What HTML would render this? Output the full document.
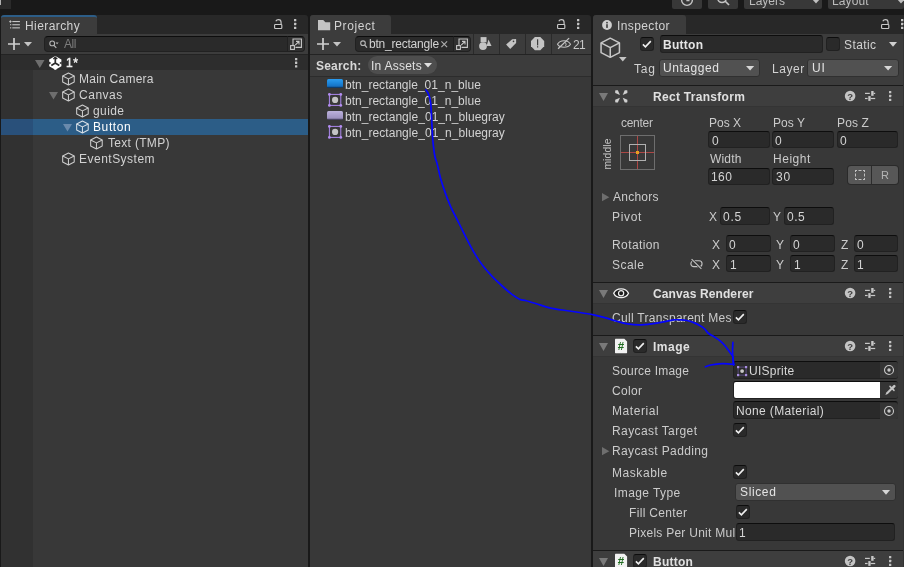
<!DOCTYPE html><html><head><meta charset="utf-8"><title>Unity</title><style>
*{box-sizing:border-box;margin:0;padding:0}
html,body{width:904px;height:567px;overflow:hidden;background:#191919}
body{position:relative;font-family:"Liberation Sans",sans-serif;font-size:12px;color:#c8c8c8;line-height:16px}
.a{position:absolute}
.t{position:absolute;white-space:nowrap;height:16px;line-height:16px;will-change:transform}
.b{font-weight:bold}
.f{position:absolute;background:#2a2a2a;border:1px solid #212121;border-top-color:#0d0d0d;border-radius:3px}
.dd{position:absolute;background:#515151;border:1px solid #303030;border-radius:3px}
.cb{position:absolute;width:14px;height:14px;background:#2a2a2a;border:1px solid #212121;border-top-color:#0d0d0d;border-radius:3px}
.hdr{position:absolute;left:593px;width:311px;background:#3e3e3e;border-top:1px solid #1a1a1a}
svg{position:absolute;overflow:visible}
</style></head><body>
<div class="a" style="left:0px;top:0px;width:11px;height:9px;background:#2a2a2a;"></div>
<div class="a" style="left:0px;top:0px;width:1px;height:5px;background:#b0b0b0;"></div>
<div class="a" style="left:672px;top:0px;width:30px;height:9px;background:#383838;border-radius:0 0 2px 2px"></div>
<div class="a" style="left:708px;top:0px;width:30px;height:9px;background:#383838;border-radius:0 0 2px 2px"></div>
<div class="a" style="left:744px;top:0px;width:78px;height:9px;background:#383838;border-radius:0 0 2px 2px"></div>
<div class="a" style="left:828px;top:0px;width:76px;height:9px;background:#383838;border-radius:0 0 2px 2px"></div>
<div class="t" style="left:748.97px;top:-7.00px;color:#bdbdbd;letter-spacing:-0.020px;">Layers</div>
<div class="t" style="left:831.97px;top:-7.00px;color:#bdbdbd;letter-spacing:0.109px;">Layout</div>
<svg style="left:812px;top:-1px" width="8" height="4.5"><path d="M0 0H8L4.0 4.5Z" fill="#c0c0c0"/></svg>
<svg style="left:896.5px;top:-1px" width="8" height="4.5"><path d="M0 0H8L4.0 4.5Z" fill="#c0c0c0"/></svg>
<svg style="left:680.2px;top:-7px" width="14" height="14"><circle cx="7" cy="7" r="5.4" fill="none" stroke="#c4c4c4" stroke-width="1.4"/><path d="M7 4V7.500H9.500" fill="none" stroke="#c4c4c4" stroke-width="1.3"/></svg>
<svg style="left:715.5px;top:-8px" width="14" height="14"><circle cx="6" cy="6" r="4.4" fill="none" stroke="#c4c4c4" stroke-width="1.500"/><path d="M9 9L13 13" stroke="#c4c4c4" stroke-width="1.7"/></svg>
<div class="a" style="left:1px;top:15px;width:307px;height:19px;background:#282828;border-radius:3px 3px 0 0"></div>
<div class="a" style="left:1px;top:15px;width:96px;height:19px;background:#3c3c3c;border-radius:3px 3px 0 0;border-top:2px solid #2c5d87"></div>
<div class="a" style="left:1px;top:34px;width:307px;height:20px;background:#3c3c3c;"></div>
<div class="a" style="left:1px;top:54px;width:307px;height:513px;background:#383838;"></div>
<div class="a" style="left:1px;top:54px;width:307px;height:1px;background:#232323;"></div>
<div class="a" style="left:1px;top:55px;width:307px;height:15px;background:#2d2d2d;"></div>
<div class="a" style="left:1px;top:70px;width:32px;height:497px;background:#313131;"></div>
<svg style="left:9px;top:20px" width="11" height="9"><g fill="#c4c4c4"><rect x="3.300" y="1" width="7.600" height="1.100"/><rect x="3.300" y="4.200" width="7.600" height="1.100"/><rect x="3.300" y="7.300" width="7.600" height="1.100"/><rect x="0.300" y="1" width="2.200" height="1.100"/><rect x="0.850" y="0.400" width="1.100" height="2.300"/><rect x="1" y="4.200" width="1.300" height="1.100"/><rect x="1" y="7.300" width="1.300" height="1.100"/></g></svg>
<div class="t" style="left:24.77px;top:18.00px;color:#d2d2d2;letter-spacing:0.420px;">Hierarchy</div>
<svg style="left:273.9px;top:18.9px" width="8.4" height="10.1"><g fill="none" stroke="#c8c8c8" stroke-width="1.150"><rect x="0.600" y="5.500" width="7.200" height="4" rx="0.700" fill="#1c1c1c"/><path d="M7.100 5.400V3.400C7.100 1.500 5.800 0.600 4.500 0.600C3.300 0.600 2.300 1.200 1.800 2.300"/></g></svg>
<svg style="left:294.2px;top:19.1px" width="3" height="12"><g fill="#c4c4c4"><rect x="0" y="0" width="2.300" height="2.300" rx=".3"/><rect x="0" y="3.85" width="2.300" height="2.300" rx=".3"/><rect x="0" y="7.7" width="2.300" height="2.300" rx=".3"/></g></svg>
<svg style="left:8px;top:38px" width="12" height="12"><path d="M6 0V12M0 6H12" stroke="#d0d0d0" stroke-width="1.7" fill="none"/></svg>
<svg style="left:24px;top:42px" width="8" height="4.5"><path d="M0 0H8L4.0 4.5Z" fill="#c4c4c4"/></svg>
<div class="f" style="left:44px;top:36px;width:244px;height:16px;border-radius:4px 0 0 4px;border-right:none"></div>
<div class="a" style="left:287px;top:36px;width:18px;height:16px;background:#303030;border:1px solid #212121;border-top-color:#0d0d0d;border-radius:0 4px 4px 0"></div>
<svg style="left:49px;top:40px" width="10" height="9"><circle cx="3.2" cy="3.400" r="2.400" fill="none" stroke="#b4b4b4" stroke-width="1.1"/><path d="M5 5.3L7.3 7.800" stroke="#b4b4b4" stroke-width="1.2"/><path d="M6.600 2.600H9.600L8.100 4.200Z" fill="#b4b4b4"/></svg>
<div class="t" style="left:63.73px;top:36.00px;color:#7c7c7c;letter-spacing:-0.405px;">All</div>
<svg style="left:290px;top:37.6px" width="12" height="12"><g fill="none" stroke="#c8c8c8" stroke-width="1.1"><path d="M3 8V1H11.400V9.400H5.500"/><rect x="0.6" y="7.600" width="3.8" height="3.8"/><path d="M5.200 7.200L9 3.400M6 3.400H9V6.400"/></g></svg>
<svg style="left:35px;top:60px" width="9.5" height="8"><path d="M0 0H9.5L4.75 8Z" fill="#6e6e6e"/></svg>
<svg style="left:48.6px;top:56px" width="12.6" height="13.8"><g><path d="M6.300 0L12.400 3.450V10.350L6.300 13.800L0.200 10.350V3.450Z" fill="#ffffff"/><path d="M6.300 0.800V7M6.300 7L2.300 9.400M6.300 7L10.300 9.400" stroke="#2a2a2a" stroke-width="1.700" fill="none"/><path d="M4.300 2.900L6.300 1.400L8.300 2.900" stroke="#2a2a2a" stroke-width="1.300" fill="none"/><path d="M0 5.600L2.300 6.900L0 8.400ZM12.600 5.600L10.300 6.900L12.600 8.400Z" fill="#2a2a2a"/><path d="M6.300 9.200V13.600" stroke="#ffffff" stroke-width="2.200"/></g></svg>
<div class="t" style="left:66.14px;top:55.00px;color:#ececec;letter-spacing:0.458px;-webkit-text-stroke:0.45px #ececec;">1*</div>
<svg style="left:295px;top:58px" width="3" height="12"><g fill="#c4c4c4"><rect x="0" y="0" width="2.300" height="2.300" rx=".3"/><rect x="0" y="3.6" width="2.300" height="2.300" rx=".3"/><rect x="0" y="7.2" width="2.300" height="2.300" rx=".3"/></g></svg>
<svg style="left:62px;top:72px" width="12.9" height="14" viewBox="0 0 13.5 14"><g fill="none" stroke="#cdcdcd" stroke-width="1.1" stroke-linejoin="round"><path d="M6.75 0.7L12.8 3.8V10.2L6.75 13.3L0.7 10.2V3.8Z"/><path d="M0.7 3.8L6.75 6.9L12.8 3.8M6.75 6.9V13.3"/></g></svg>
<div class="t" style="left:78.97px;top:71.00px;color:#d2d2d2;letter-spacing:0.246px;">Main Camera</div>
<svg style="left:62px;top:88px" width="12.9" height="14" viewBox="0 0 13.5 14"><g fill="none" stroke="#cdcdcd" stroke-width="1.1" stroke-linejoin="round"><path d="M6.75 0.7L12.8 3.8V10.2L6.75 13.3L0.7 10.2V3.8Z"/><path d="M0.7 3.8L6.75 6.9L12.8 3.8M6.75 6.9V13.3"/></g></svg>
<div class="t" style="left:79.34px;top:87.00px;color:#d2d2d2;letter-spacing:0.521px;">Canvas</div>
<svg style="left:49px;top:92px" width="9" height="7.5"><path d="M0 0H9L4.5 7.5Z" fill="#6e6e6e"/></svg>
<svg style="left:76px;top:104px" width="12.9" height="14" viewBox="0 0 13.5 14"><g fill="none" stroke="#cdcdcd" stroke-width="1.1" stroke-linejoin="round"><path d="M6.75 0.7L12.8 3.8V10.2L6.75 13.3L0.7 10.2V3.8Z"/><path d="M0.7 3.8L6.75 6.9L12.8 3.8M6.75 6.9V13.3"/></g></svg>
<div class="t" style="left:93.20px;top:103.00px;color:#d2d2d2;letter-spacing:0.419px;">guide</div>
<div class="a" style="left:1px;top:119px;width:307px;height:16px;background:#2c5d87;"></div>
<div class="a" style="left:1px;top:119px;width:32px;height:16px;background:#29507a;"></div>
<svg style="left:76px;top:120px" width="12.9" height="14" viewBox="0 0 13.5 14"><g fill="none" stroke="#d8e0e8" stroke-width="1.1" stroke-linejoin="round"><path d="M6.75 0.7L12.8 3.8V10.2L6.75 13.3L0.7 10.2V3.8Z"/><path d="M0.7 3.8L6.75 6.9L12.8 3.8M6.75 6.9V13.3"/></g></svg>
<div class="t" style="left:92.72px;top:119.00px;color:#ffffff;letter-spacing:0.614px;">Button</div>
<svg style="left:63px;top:124px" width="9" height="7.5"><path d="M0 0H9L4.5 7.5Z" fill="#6a8aac"/></svg>
<svg style="left:90.2px;top:136px" width="12.9" height="14" viewBox="0 0 13.5 14"><g fill="none" stroke="#cdcdcd" stroke-width="1.1" stroke-linejoin="round"><path d="M6.75 0.7L12.8 3.8V10.2L6.75 13.3L0.7 10.2V3.8Z"/><path d="M0.7 3.8L6.75 6.9L12.8 3.8M6.75 6.9V13.3"/></g></svg>
<div class="t" style="left:107.68px;top:135.00px;color:#d2d2d2;letter-spacing:0.308px;">Text (TMP)</div>
<svg style="left:62px;top:152px" width="12.9" height="14" viewBox="0 0 13.5 14"><g fill="none" stroke="#cdcdcd" stroke-width="1.1" stroke-linejoin="round"><path d="M6.75 0.7L12.8 3.8V10.2L6.75 13.3L0.7 10.2V3.8Z"/><path d="M0.7 3.8L6.75 6.9L12.8 3.8M6.75 6.9V13.3"/></g></svg>
<div class="t" style="left:78.97px;top:151.00px;color:#d2d2d2;letter-spacing:0.488px;">EventSystem</div>
<div class="a" style="left:310px;top:15px;width:281px;height:19px;background:#282828;border-radius:3px 3px 0 0"></div>
<div class="a" style="left:310px;top:15px;width:81px;height:19px;background:#3c3c3c;border-radius:3px 3px 0 0"></div>
<div class="a" style="left:310px;top:34px;width:281px;height:20px;background:#3c3c3c;"></div>
<div class="a" style="left:310px;top:54px;width:281px;height:513px;background:#383838;"></div>
<div class="a" style="left:310px;top:54px;width:281px;height:1px;background:#232323;"></div>
<div class="a" style="left:310px;top:55px;width:281px;height:21px;background:#3c3c3c;"></div>
<div class="a" style="left:310px;top:76px;width:281px;height:1px;background:#2c2c2c;"></div>
<svg style="left:317.9px;top:19.7px" width="12.2" height="10.2"><path d="M0 0H5.200L7.400 2.300H12.200V10.200H0Z" fill="#c4c4c4"/></svg>
<div class="t" style="left:333.72px;top:18.00px;color:#d2d2d2;letter-spacing:0.579px;">Project</div>
<svg style="left:556.5px;top:18.9px" width="8.4" height="10.1"><g fill="none" stroke="#c8c8c8" stroke-width="1.150"><rect x="0.600" y="5.500" width="7.200" height="4" rx="0.700" fill="#1c1c1c"/><path d="M7.100 5.400V3.400C7.100 1.500 5.800 0.600 4.500 0.600C3.300 0.600 2.300 1.200 1.800 2.300"/></g></svg>
<svg style="left:576.7px;top:19.1px" width="3" height="12"><g fill="#c4c4c4"><rect x="0" y="0" width="2.300" height="2.300" rx=".3"/><rect x="0" y="3.85" width="2.300" height="2.300" rx=".3"/><rect x="0" y="7.7" width="2.300" height="2.300" rx=".3"/></g></svg>
<svg style="left:317px;top:38px" width="12" height="12"><path d="M6 0V12M0 6H12" stroke="#d0d0d0" stroke-width="1.7" fill="none"/></svg>
<svg style="left:333px;top:42px" width="8" height="4.5"><path d="M0 0H8L4.0 4.5Z" fill="#c4c4c4"/></svg>
<div class="f" style="left:355px;top:36px;width:98.5px;height:16px;border-radius:4px 0 0 4px;border-right:none"></div>
<div class="a" style="left:452.500px;top:36px;width:18.500px;height:16px;background:#303030;border:1px solid #212121;border-top-color:#0d0d0d;border-radius:0 4px 4px 0"></div>
<svg style="left:360px;top:40.3px" width="8" height="9"><circle cx="3" cy="3.200" r="2.300" fill="none" stroke="#b4b4b4" stroke-width="1.1"/><path d="M4.700 5L7 7.700" stroke="#b4b4b4" stroke-width="1.3"/></svg>
<div class="t" style="left:369.18px;top:36.00px;color:#d2d2d2;letter-spacing:-0.222px;">btn_rectangle</div>
<svg style="left:440.5px;top:41.3px" width="6.5" height="6.5"><path d="M0.400 0.400L6.100 6.100M6.100 0.400L0.400 6.100" stroke="#b0b0b0" stroke-width="1.1"/></svg>
<svg style="left:456px;top:37.8px" width="12" height="12"><g fill="none" stroke="#c8c8c8" stroke-width="1.1"><path d="M3 8V1H11.400V9.400H5.500"/><rect x="0.6" y="7.600" width="3.8" height="3.8"/><path d="M5.200 7.200L9 3.400M6 3.400H9V6.400"/></g></svg>
<div class="a" style="left:473px;top:34px;width:1px;height:20px;background:#2a2a2a;"></div>
<div class="a" style="left:499px;top:34px;width:1px;height:20px;background:#2a2a2a;"></div>
<div class="a" style="left:525px;top:34px;width:1px;height:20px;background:#2a2a2a;"></div>
<div class="a" style="left:551px;top:34px;width:1px;height:20px;background:#2a2a2a;"></div>
<svg style="left:479.4px;top:37px" width="13" height="13.2"><g fill="#c4c4c4"><rect x="1.600" y="0.100" width="5.900" height="5.200"/><circle cx="4" cy="9.100" r="3.900"/><path d="M7.500 8.900L9.500 2.600L12.500 8.900Z"/></g></svg>
<svg style="left:506px;top:39px" width="10.2" height="10"><path d="M6.200 0.300L10.100 0V4L4.200 9.900L0.100 5.600Z" fill="#c4c4c4"/><circle cx="7.500" cy="2.400" r="0.800" fill="#3c3c3c"/></svg>
<svg style="left:531px;top:37px" width="13.2" height="13.2"><path d="M3.900 0H9.300L13.200 3.900V9.300L9.300 13.200H3.900L0 9.300V3.900Z" fill="#c4c4c4"/><rect x="6" y="2.300" width="1.200" height="6.100" fill="#3c3c3c"/><rect x="6" y="9.200" width="1.200" height="1.300" fill="#3c3c3c"/></svg>
<svg style="left:557px;top:38px" width="14" height="11"><g fill="none" stroke="#c4c4c4" stroke-width="1.100"><path d="M0.500 6.200C3 1.500 11 1.500 13.500 6.200C11 10.200 3 10.200 0.500 6.200Z"/><path d="M8 4.500A2 2 0 0 1 8.200 8" stroke-width="1"/><path d="M1.100 10.700L12.100 0.100" stroke-width="1.300"/></g></svg>
<div class="t" style="left:572.95px;top:37.00px;color:#c8c8c8;letter-spacing:-0.600px;">21</div>
<div class="t b" style="left:316.35px;top:58.00px;color:#d8d8d8;letter-spacing:0.205px;">Search:</div>
<div class="a" style="left:368px;top:56px;width:69px;height:18px;background:#4e4e4e;border-radius:9px"></div>
<div class="t" style="left:371.34px;top:58.00px;color:#e0e0e0;letter-spacing:0.242px;">In Assets</div>
<svg style="left:423.75px;top:63px" width="8" height="4.5"><path d="M0 0H8L4.0 4.5Z" fill="#e0e0e0"/></svg>
<div class="a" style="left:327px;top:79px;width:16px;height:9px;border-radius:1.500px;background:linear-gradient(#2b9cf0,#1c86da 45%,#1672c4 80%,#0d3c6c 93%)"></div>
<div class="t" style="left:345.18px;top:77.00px;color:#d2d2d2;letter-spacing:0.016px;">btn_rectangle_01_n_blue</div>
<svg style="left:328px;top:93px" width="14.200" height="13.800" viewBox="0 0 14.200 13.800"><rect x="1.400" y="1.400" width="11.400" height="11" fill="none" stroke="#ac88ee" stroke-width="1"/><g fill="#b48ef2"><circle cx="1.400" cy="1.400" r="1.400"/><circle cx="12.800" cy="1.400" r="1.400"/><circle cx="1.400" cy="12.400" r="1.400"/><circle cx="12.800" cy="12.400" r="1.400"/></g><circle cx="7.100" cy="6.900" r="3.100" fill="#c4c4c4"/></svg>
<div class="t" style="left:345.18px;top:93.00px;color:#d2d2d2;letter-spacing:0.016px;">btn_rectangle_01_n_blue</div>
<div class="a" style="left:327px;top:111px;width:16px;height:9px;border-radius:1.500px;background:linear-gradient(#bcb2dc,#aa9fcc 45%,#9d92bf 80%,#4b4562 93%)"></div>
<div class="t" style="left:345.18px;top:109.00px;color:#d2d2d2;letter-spacing:0.039px;">btn_rectangle_01_n_bluegray</div>
<svg style="left:328px;top:125px" width="14.200" height="13.800" viewBox="0 0 14.200 13.800"><rect x="1.400" y="1.400" width="11.400" height="11" fill="none" stroke="#ac88ee" stroke-width="1"/><g fill="#b48ef2"><circle cx="1.400" cy="1.400" r="1.400"/><circle cx="12.800" cy="1.400" r="1.400"/><circle cx="1.400" cy="12.400" r="1.400"/><circle cx="12.800" cy="12.400" r="1.400"/></g><circle cx="7.100" cy="6.900" r="3.100" fill="#c4c4c4"/></svg>
<div class="t" style="left:345.18px;top:125.00px;color:#d2d2d2;letter-spacing:0.039px;">btn_rectangle_01_n_bluegray</div>
<div class="a" style="left:593px;top:15px;width:311px;height:19px;background:#282828;border-radius:3px 0 0 0"></div>
<div class="a" style="left:593px;top:15px;width:93px;height:19px;background:#3c3c3c;border-radius:3px 3px 0 0"></div>
<div class="a" style="left:593px;top:34px;width:311px;height:533px;background:#383838;"></div>
<div class="a" style="left:593px;top:34px;width:311px;height:52px;background:#3c3c3c;"></div>
<svg style="left:602px;top:20px" width="10" height="10"><circle cx="5" cy="5" r="4.900" fill="#d0d0d0"/><rect x="4.200" y="4.200" width="1.600" height="3.700" fill="#3c3c3c"/><rect x="4.200" y="1.900" width="1.600" height="1.500" fill="#3c3c3c"/></svg>
<div class="t" style="left:616.84px;top:18.00px;color:#d2d2d2;letter-spacing:0.400px;">Inspector</div>
<svg style="left:880.8px;top:18.9px" width="8.4" height="10.1"><g fill="none" stroke="#c8c8c8" stroke-width="1.150"><rect x="0.600" y="5.500" width="7.200" height="4" rx="0.700" fill="#1c1c1c"/><path d="M7.100 5.400V3.400C7.100 1.500 5.800 0.600 4.500 0.600C3.300 0.600 2.300 1.200 1.800 2.300"/></g></svg>
<svg style="left:900.9px;top:19.1px" width="3" height="12"><g fill="#c4c4c4"><rect x="0" y="0" width="2.300" height="2.300" rx=".3"/><rect x="0" y="3.85" width="2.300" height="2.300" rx=".3"/><rect x="0" y="7.7" width="2.300" height="2.300" rx=".3"/></g></svg>
<svg style="left:600px;top:36.5px" width="20.5" height="21.5" viewBox="0 0 13.5 14"><g fill="none" stroke="#c8c8c8" stroke-width="1.0" stroke-linejoin="round"><path d="M6.75 0.7L12.8 3.8V10.2L6.75 13.3L0.7 10.2V3.8Z"/><path d="M0.7 3.8L6.75 6.9L12.8 3.8M6.75 6.9V13.3"/></g></svg>
<svg style="left:619.2px;top:56.8px" width="7.6" height="4.4"><path d="M0 0H7.6L3.8 4.4Z" fill="#c4c4c4"/></svg>
<div class="cb" style="left:640px;top:37px"></div>
<svg style="left:640px;top:37px" width="14" height="14"><path d="M2.900 7.400L5.400 9.800L10.800 4.100" fill="none" stroke="#f0f0f0" stroke-width="1.600"/></svg>
<div class="f" style="left:660px;top:35px;width:163px;height:18px;"></div>
<div class="t b" style="left:662.90px;top:37.00px;color:#e4e4e4;letter-spacing:0.280px;">Button</div>
<div class="cb" style="left:825.5px;top:37px"></div>
<div class="t" style="left:844.16px;top:37.00px;color:#d2d2d2;letter-spacing:0.420px;">Static</div>
<svg style="left:888.75px;top:42px" width="8" height="4.7"><path d="M0 0H8L4.0 4.7Z" fill="#d0d0d0"/></svg>
<div class="t" style="left:633.93px;top:61.00px;color:#d2d2d2;letter-spacing:0.800px;">Tag</div>
<div class="dd" style="left:659px;top:59px;width:101px;height:18px"></div>
<div class="t" style="left:662.77px;top:60.00px;color:#e4e4e4;letter-spacing:0.558px;">Untagged</div>
<svg style="left:745.5px;top:66.2px" width="8.2" height="4.4"><path d="M0 0H8.2L4.1 4.4Z" fill="#d6d6d6"/></svg>
<div class="t" style="left:771.67px;top:61.00px;color:#d2d2d2;letter-spacing:0.567px;">Layer</div>
<div class="dd" style="left:807px;top:59px;width:92px;height:18px"></div>
<div class="t" style="left:811.77px;top:60.00px;color:#e4e4e4;letter-spacing:0.783px;">UI</div>
<svg style="left:884.25px;top:66.2px" width="8.2" height="4.4"><path d="M0 0H8.2L4.1 4.4Z" fill="#d6d6d6"/></svg>
<div class="hdr" style="top:85px;height:21px"></div>
<div class="a" style="left:593px;top:106px;width:311px;height:1px;background:#343434;"></div>
<svg style="left:599px;top:93px" width="9" height="8"><path d="M0 0H9L4.5 8Z" fill="#7a7a7a"/></svg>
<div class="t b" style="left:652.90px;top:89.00px;color:#e0e0e0;letter-spacing:0.297px;">Rect Transform</div>
<svg style="left:844px;top:90px;will-change:transform" width="12" height="12"><circle cx="6.100" cy="6" r="5.300" fill="#c4c4c4"/><text x="6.100" y="9.500" font-size="9.500" font-weight="bold" text-anchor="middle" fill="#3e3e3e" font-family="Liberation Sans,sans-serif">?</text></svg>
<svg style="left:865px;top:90.9px" width="10.2" height="10"><g fill="#c8c8c8"><rect x="0" y="1.800" width="4.800" height="1.200"/><rect x="6.200" y="0" width="2.400" height="4.800"/><rect x="8.600" y="1.800" width="1.600" height="1.200"/><rect x="0" y="6.900" width="2.600" height="1.200"/><rect x="3.300" y="5.100" width="2.300" height="4.800"/><rect x="5.600" y="6.900" width="4.600" height="1.200"/></g></svg>
<svg style="left:888.7px;top:91.1px" width="3" height="12"><g fill="#c4c4c4"><rect x="0" y="0" width="2.300" height="2.300" rx=".3"/><rect x="0" y="3.85" width="2.300" height="2.300" rx=".3"/><rect x="0" y="7.7" width="2.300" height="2.300" rx=".3"/></g></svg>
<svg style="left:614.7px;top:89.6px" width="12.6" height="12.6"><g fill="#d0d0d0"><path d="M0.200 2.900V0.800Q0.200 0.200 0.800 0.200H2.900L4.900 4.900Z"/><path d="M12.400 2.900V0.800Q12.400 0.200 11.800 0.200H9.700L7.700 4.900Z"/><path d="M0.200 9.700V11.800Q0.200 12.400 0.800 12.400H2.900L4.900 7.700Z"/><path d="M12.400 9.700V11.800Q12.400 12.400 11.800 12.400H9.700L7.700 7.700Z"/></g></svg>
<div class="t" style="left:621.19px;top:115.00px;color:#c4c4c4;letter-spacing:-0.279px;">center</div>
<div class="a" style="left:607.500px;top:153.750px;width:0;height:0"><div class="t" style="left:-20px;top:-8px;width:40px;text-align:center;transform:rotate(-90deg);color:#c4c4c4;font-size:10.300px;letter-spacing:.15px">middle</div></div>
<svg style="left:620px;top:135px" width="35" height="35"><rect x="0.500" y="0.500" width="34" height="34" fill="none" stroke="#6e6e6e" stroke-width="1"/><path d="M17.500 1V34M1 17.500H34" stroke="#c24a48" stroke-width="1" opacity=".85"/><rect x="9.500" y="9.500" width="16" height="16" fill="none" stroke="#b0b0b0" stroke-width="1"/><rect x="16" y="16" width="3" height="3" fill="#e8a020"/></svg>
<div class="t" style="left:708.72px;top:115.00px;color:#cbcbcb;letter-spacing:-0.007px;">Pos X</div>
<div class="t" style="left:772.72px;top:115.00px;color:#cbcbcb;letter-spacing:0.058px;">Pos Y</div>
<div class="t" style="left:837.47px;top:115.00px;color:#cbcbcb;letter-spacing:0.129px;">Pos Z</div>
<div class="f" style="left:708px;top:131px;width:61.5px;height:17px;"></div>
<div class="t" style="left:711.73px;top:133.00px;color:#d4d4d4;letter-spacing:0.000px;">0</div>
<div class="f" style="left:771.75px;top:131px;width:62px;height:17px;"></div>
<div class="t" style="left:775.48px;top:133.00px;color:#d4d4d4;letter-spacing:0.000px;">0</div>
<div class="f" style="left:836.75px;top:131px;width:61.5px;height:17px;"></div>
<div class="t" style="left:840.48px;top:133.00px;color:#d4d4d4;letter-spacing:0.000px;">0</div>
<div class="t" style="left:709.90px;top:151.00px;color:#cbcbcb;letter-spacing:0.165px;">Width</div>
<div class="t" style="left:772.72px;top:151.00px;color:#cbcbcb;letter-spacing:0.527px;">Height</div>
<div class="f" style="left:708px;top:167.5px;width:61.5px;height:17px;"></div>
<div class="t" style="left:710.79px;top:169.00px;color:#d4d4d4;letter-spacing:0.431px;">160</div>
<div class="f" style="left:771.75px;top:167.5px;width:62px;height:17px;"></div>
<div class="t" style="left:775.74px;top:169.00px;color:#d4d4d4;letter-spacing:0.800px;">30</div>
<div class="a" style="left:848px;top:166px;width:50px;height:18px;background:#575757;border-radius:3px;box-shadow:0 0 0 1px rgba(34,34,34,.6)"></div>
<div class="a" style="left:871px;top:166px;width:1px;height:18px;background:#2c2c2c;"></div>
<svg style="left:855px;top:170px" width="10" height="10"><path d="M0 0.500H2M0 9.500H2M0.500 0V2M9.500 0V2M3.5 0.500H6.5M3.5 9.500H6.5M0.500 3.5V6.5M9.500 3.5V6.5M8 0.500H10M8 9.500H10M0.500 8V10M9.500 8V10" stroke="#c0c0c0" stroke-width="1" fill="none"/></svg>
<div class="t" style="left:881.45px;top:167.26px;color:#b4b4b4;letter-spacing:0.000px;font-size:11px;">R</div>
<svg style="left:601.5px;top:192.5px" width="7.3" height="8.3"><path d="M0 0L7.3 4.15L0 8.3Z" fill="#6e6e6e"/></svg>
<div class="t" style="left:612.93px;top:189.00px;color:#cbcbcb;letter-spacing:0.239px;">Anchors</div>
<div class="t" style="left:611.97px;top:209.00px;color:#cbcbcb;letter-spacing:0.661px;">Pivot</div>
<div class="t" style="left:709.43px;top:209.00px;color:#cbcbcb;letter-spacing:0.000px;">X</div>
<div class="f" style="left:720px;top:207px;width:49.5px;height:17.5px;"></div>
<div class="t" style="left:723.23px;top:209.00px;color:#d4d4d4;letter-spacing:0.771px;">0.5</div>
<div class="t" style="left:773.44px;top:209.00px;color:#cbcbcb;letter-spacing:0.000px;">Y</div>
<div class="f" style="left:784.25px;top:207px;width:49.5px;height:17.5px;"></div>
<div class="t" style="left:787.48px;top:209.00px;color:#d4d4d4;letter-spacing:0.521px;">0.5</div>
<div class="t" style="left:611.97px;top:237.00px;color:#cbcbcb;letter-spacing:0.403px;">Rotation</div>
<div class="t" style="left:712.18px;top:237.00px;color:#cbcbcb;letter-spacing:0.000px;">X</div>
<div class="f" style="left:726px;top:235px;width:44.5px;height:17px;"></div>
<div class="t" style="left:729.38px;top:237.00px;color:#d4d4d4;letter-spacing:0.000px;">0</div>
<div class="t" style="left:776.44px;top:237.00px;color:#cbcbcb;letter-spacing:0.000px;">Y</div>
<div class="f" style="left:790px;top:235px;width:44.5px;height:17px;"></div>
<div class="t" style="left:793.38px;top:237.00px;color:#d4d4d4;letter-spacing:0.000px;">0</div>
<div class="t" style="left:840.57px;top:237.00px;color:#cbcbcb;letter-spacing:0.000px;">Z</div>
<div class="f" style="left:853.75px;top:235px;width:44.5px;height:17px;"></div>
<div class="t" style="left:857.13px;top:237.00px;color:#d4d4d4;letter-spacing:0.000px;">0</div>
<div class="t" style="left:612.41px;top:257.00px;color:#cbcbcb;letter-spacing:0.453px;">Scale</div>
<div class="t" style="left:712.18px;top:257.00px;color:#cbcbcb;letter-spacing:0.000px;">X</div>
<div class="f" style="left:726px;top:255px;width:44.5px;height:17px;"></div>
<div class="t" style="left:729.74px;top:257.00px;color:#d4d4d4;letter-spacing:0.000px;">1</div>
<div class="t" style="left:776.44px;top:257.00px;color:#cbcbcb;letter-spacing:0.000px;">Y</div>
<div class="f" style="left:790px;top:255px;width:44.5px;height:17px;"></div>
<div class="t" style="left:793.74px;top:257.00px;color:#d4d4d4;letter-spacing:0.000px;">1</div>
<div class="t" style="left:840.57px;top:257.00px;color:#cbcbcb;letter-spacing:0.000px;">Z</div>
<div class="f" style="left:853.75px;top:255px;width:44.5px;height:17px;"></div>
<div class="t" style="left:857.49px;top:257.00px;color:#d4d4d4;letter-spacing:0.000px;">1</div>
<svg style="left:689.5px;top:259px" width="13" height="10"><g fill="none" stroke="#c4c4c4" stroke-width="1.100"><rect x="0.850" y="1.750" width="11.200" height="5.900" rx="2.950"/><path d="M2.300 0.900L10.700 9.100" stroke="#383838" stroke-width="2.600"/><path d="M1.600 0.200L11.400 9.800"/></g></svg>
<div class="hdr" style="top:282px;height:21px"></div>
<div class="a" style="left:593px;top:303px;width:311px;height:1px;background:#343434;"></div>
<svg style="left:599px;top:290px" width="9" height="8"><path d="M0 0H9L4.5 8Z" fill="#7a7a7a"/></svg>
<div class="t b" style="left:653.21px;top:286.00px;color:#e0e0e0;letter-spacing:0.122px;">Canvas Renderer</div>
<svg style="left:844px;top:287px;will-change:transform" width="12" height="12"><circle cx="6.100" cy="6" r="5.300" fill="#c4c4c4"/><text x="6.100" y="9.500" font-size="9.500" font-weight="bold" text-anchor="middle" fill="#3e3e3e" font-family="Liberation Sans,sans-serif">?</text></svg>
<svg style="left:865px;top:287.9px" width="10.2" height="10"><g fill="#c8c8c8"><rect x="0" y="1.800" width="4.800" height="1.200"/><rect x="6.200" y="0" width="2.400" height="4.800"/><rect x="8.600" y="1.800" width="1.600" height="1.200"/><rect x="0" y="6.900" width="2.600" height="1.200"/><rect x="3.300" y="5.100" width="2.300" height="4.800"/><rect x="5.600" y="6.900" width="4.600" height="1.200"/></g></svg>
<svg style="left:888.7px;top:288.1px" width="3" height="12"><g fill="#c4c4c4"><rect x="0" y="0" width="2.300" height="2.300" rx=".3"/><rect x="0" y="3.85" width="2.300" height="2.300" rx=".3"/><rect x="0" y="7.7" width="2.300" height="2.300" rx=".3"/></g></svg>
<svg style="left:613px;top:286.8px" width="16.2" height="12.4"><path d="M0.700 6.200C3.300 0.300 12.900 0.300 15.500 6.200C12.900 12.100 3.300 12.100 0.700 6.200Z" fill="#1e1e1e" stroke="#f0f0f0" stroke-width="1.300"/><circle cx="8.100" cy="6.200" r="2.600" fill="#1e1e1e" stroke="#f0f0f0" stroke-width="1.200"/></svg>
<div class="a" style="left:600px;top:306px;width:131px;height:20px;overflow:hidden">
<div class="t" style="left:12.34px;top:4.00px;color:#cbcbcb;letter-spacing:0.290px;">Cull Transparent Mesh</div>
</div>
<div class="cb" style="left:732.5px;top:310px"></div>
<svg style="left:732.5px;top:310px" width="14" height="14"><path d="M2.900 7.400L5.400 9.800L10.800 4.100" fill="none" stroke="#f0f0f0" stroke-width="1.600"/></svg>
<div class="hdr" style="top:335px;height:21px"></div>
<div class="a" style="left:593px;top:356px;width:311px;height:1px;background:#343434;"></div>
<svg style="left:599px;top:343px" width="9" height="8"><path d="M0 0H9L4.5 8Z" fill="#7a7a7a"/></svg>
<div class="t b" style="left:652.90px;top:339.00px;color:#e0e0e0;letter-spacing:0.508px;">Image</div>
<svg style="left:844px;top:340px;will-change:transform" width="12" height="12"><circle cx="6.100" cy="6" r="5.300" fill="#c4c4c4"/><text x="6.100" y="9.500" font-size="9.500" font-weight="bold" text-anchor="middle" fill="#3e3e3e" font-family="Liberation Sans,sans-serif">?</text></svg>
<svg style="left:865px;top:340.9px" width="10.2" height="10"><g fill="#c8c8c8"><rect x="0" y="1.800" width="4.800" height="1.200"/><rect x="6.200" y="0" width="2.400" height="4.800"/><rect x="8.600" y="1.800" width="1.600" height="1.200"/><rect x="0" y="6.900" width="2.600" height="1.200"/><rect x="3.300" y="5.100" width="2.300" height="4.800"/><rect x="5.600" y="6.900" width="4.600" height="1.200"/></g></svg>
<svg style="left:888.7px;top:341.1px" width="3" height="12"><g fill="#c4c4c4"><rect x="0" y="0" width="2.300" height="2.300" rx=".3"/><rect x="0" y="3.85" width="2.300" height="2.300" rx=".3"/><rect x="0" y="7.7" width="2.300" height="2.300" rx=".3"/></g></svg>
<svg style="left:615px;top:338px;will-change:transform" width="13" height="16"><path d="M0.600 0.800H9.300L12.100 3.600V14.600Q12.100 15.200 11.500 15.200H0.600Q0 15.200 0 14.600V1.400Q0 0.800 0.600 0.800Z" fill="#f2f2f2"/><text x="5.900" y="12.400" font-size="11.500" font-weight="bold" text-anchor="middle" fill="#1f6b1f" font-family="Liberation Sans,sans-serif">#</text></svg>
<div class="cb" style="left:633px;top:339px"></div>
<svg style="left:633px;top:339px" width="14" height="14"><path d="M2.900 7.400L5.400 9.800L10.800 4.100" fill="none" stroke="#f0f0f0" stroke-width="1.600"/></svg>
<div class="t" style="left:612.41px;top:363.00px;color:#cbcbcb;letter-spacing:0.193px;">Source Image</div>
<div class="t" style="left:612.34px;top:383.00px;color:#cbcbcb;letter-spacing:0.346px;">Color</div>
<div class="t" style="left:611.97px;top:403.00px;color:#cbcbcb;letter-spacing:0.587px;">Material</div>
<div class="t" style="left:611.97px;top:423.00px;color:#cbcbcb;letter-spacing:0.401px;">Raycast Target</div>
<div class="t" style="left:611.97px;top:443.00px;color:#cbcbcb;letter-spacing:0.378px;">Raycast Padding</div>
<div class="t" style="left:611.97px;top:465.00px;color:#cbcbcb;letter-spacing:0.559px;">Maskable</div>
<div class="t" style="left:614.34px;top:485.00px;color:#cbcbcb;letter-spacing:0.420px;">Image Type</div>
<div class="t" style="left:629.47px;top:505.00px;color:#cbcbcb;letter-spacing:0.325px;">Fill Center</div>
<div class="t" style="left:629.47px;top:525.00px;color:#cbcbcb;letter-spacing:0.260px;">Pixels Per Unit Mul</div>
<svg style="left:601.5px;top:446.5px" width="7.3" height="8.3"><path d="M0 0L7.3 4.15L0 8.3Z" fill="#6e6e6e"/></svg>
<div class="f" style="left:733px;top:361px;width:165px;height:18px;"></div>
<svg style="left:737px;top:365.900px" width="10.200" height="10.200" viewBox="0 0 10.200 10.200"><rect x="1.100" y="1.100" width="8" height="8" fill="none" stroke="#7a64b4" stroke-width="0.800" opacity=".75"/><g fill="#a88ee0"><rect x="0" y="0" width="2.200" height="2.200"/><rect x="8" y="0" width="2.200" height="2.200"/><rect x="0" y="8" width="2.200" height="2.200"/><rect x="8" y="8" width="2.200" height="2.200"/></g><circle cx="5.100" cy="5.100" r="1.900" fill="#c8c8c8"/></svg>
<div class="t" style="left:748.77px;top:363.00px;color:#d8d8d8;letter-spacing:0.266px;">UISprite</div>
<div class="a" style="left:880.0px;top:362px;width:17.5px;height:16px;background:#353535;border-radius:0 2px 2px 0"></div>
<svg style="left:884.0px;top:365px" width="10.2" height="10.2"><circle cx="5" cy="5" r="4.500" fill="none" stroke="#c8c8c8" stroke-width="1.1"/><circle cx="5" cy="5" r="1.700" fill="#c8c8c8"/></svg>
<div class="f" style="left:732.5px;top:381px;width:165.5px;height:18px;"></div>
<div class="a" style="left:733.5px;top:382px;width:146.5px;height:16px;background:#ffffff;border-radius:2px 0 0 2px"></div>
<div class="a" style="left:880px;top:382px;width:17.5px;height:16px;background:#353535;border-radius:0 2px 2px 0"></div>
<svg style="left:884.5px;top:384px" width="10.6" height="11.4"><g stroke="#c4c4c4" fill="none"><path d="M0.400 11L1.300 8.600L6.300 3.600L7.800 5.100L2.800 10.100Z" fill="#c4c4c4" stroke="none"/><path d="M5 2.400L9 6.400" stroke-width="1.500" stroke-linecap="round"/><path d="M7.300 4.100L9.300 2.100" stroke-width="2.600" stroke-linecap="round"/></g></svg>
<div class="f" style="left:733px;top:401px;width:165px;height:18px;"></div>
<div class="t" style="left:735.72px;top:403.00px;color:#d8d8d8;letter-spacing:0.360px;">None (Material)</div>
<div class="a" style="left:880.0px;top:402.5px;width:17.5px;height:16px;background:#353535;border-radius:0 2px 2px 0"></div>
<svg style="left:884.0px;top:405.5px" width="10.2" height="10.2"><circle cx="5" cy="5" r="4.500" fill="none" stroke="#c8c8c8" stroke-width="1.1"/><circle cx="5" cy="5" r="1.700" fill="#c8c8c8"/></svg>
<div class="cb" style="left:733px;top:423px"></div>
<svg style="left:733px;top:423px" width="14" height="14"><path d="M2.900 7.400L5.400 9.800L10.800 4.100" fill="none" stroke="#f0f0f0" stroke-width="1.600"/></svg>
<div class="cb" style="left:733px;top:465px"></div>
<svg style="left:733px;top:465px" width="14" height="14"><path d="M2.900 7.400L5.400 9.800L10.800 4.100" fill="none" stroke="#f0f0f0" stroke-width="1.600"/></svg>
<div class="cb" style="left:736px;top:505px"></div>
<svg style="left:736px;top:505px" width="14" height="14"><path d="M2.900 7.400L5.400 9.800L10.800 4.100" fill="none" stroke="#f0f0f0" stroke-width="1.600"/></svg>
<div class="dd" style="left:735px;top:483px;width:161px;height:18px"></div>
<div class="t" style="left:739.91px;top:484.00px;color:#e4e4e4;letter-spacing:0.627px;">Sliced</div>
<svg style="left:881.75px;top:489.5px" width="8" height="4.7"><path d="M0 0H8L4.0 4.7Z" fill="#d6d6d6"/></svg>
<div class="f" style="left:736px;top:523px;width:159px;height:17.5px;"></div>
<div class="t" style="left:739.04px;top:525.00px;color:#d4d4d4;letter-spacing:0.000px;">1</div>
<div class="hdr" style="top:550px;height:21px"></div>
<div class="a" style="left:593px;top:571px;width:311px;height:1px;background:#343434;"></div>
<svg style="left:599px;top:558px" width="9" height="8"><path d="M0 0H9L4.5 8Z" fill="#7a7a7a"/></svg>
<div class="t b" style="left:652.90px;top:554.00px;color:#e0e0e0;letter-spacing:0.230px;">Button</div>
<svg style="left:844px;top:555px;will-change:transform" width="12" height="12"><circle cx="6.100" cy="6" r="5.300" fill="#c4c4c4"/><text x="6.100" y="9.500" font-size="9.500" font-weight="bold" text-anchor="middle" fill="#3e3e3e" font-family="Liberation Sans,sans-serif">?</text></svg>
<svg style="left:865px;top:555.9px" width="10.2" height="10"><g fill="#c8c8c8"><rect x="0" y="1.800" width="4.800" height="1.200"/><rect x="6.200" y="0" width="2.400" height="4.800"/><rect x="8.600" y="1.800" width="1.600" height="1.200"/><rect x="0" y="6.900" width="2.600" height="1.200"/><rect x="3.300" y="5.100" width="2.300" height="4.800"/><rect x="5.600" y="6.900" width="4.600" height="1.200"/></g></svg>
<svg style="left:888.7px;top:556.1px" width="3" height="12"><g fill="#c4c4c4"><rect x="0" y="0" width="2.300" height="2.300" rx=".3"/><rect x="0" y="3.85" width="2.300" height="2.300" rx=".3"/><rect x="0" y="7.7" width="2.300" height="2.300" rx=".3"/></g></svg>
<svg style="left:615px;top:553px;will-change:transform" width="13" height="16"><path d="M0.600 0.800H9.300L12.100 3.600V14.600Q12.100 15.200 11.500 15.200H0.600Q0 15.200 0 14.600V1.400Q0 0.800 0.600 0.800Z" fill="#f2f2f2"/><text x="5.900" y="12.400" font-size="11.500" font-weight="bold" text-anchor="middle" fill="#1f6b1f" font-family="Liberation Sans,sans-serif">#</text></svg>
<div class="cb" style="left:633px;top:554px"></div>
<svg style="left:633px;top:554px" width="14" height="14"><path d="M2.900 7.400L5.400 9.800L10.800 4.100" fill="none" stroke="#f0f0f0" stroke-width="1.600"/></svg>
<div class="a" style="left:591px;top:15px;width:2px;height:552px;background:#191919;"></div>
<div class="a" style="left:903px;top:34px;width:1px;height:533px;background:#333333;"></div>
<svg style="left:0;top:0" width="904" height="567"><g fill="none" stroke="#0505ff" stroke-width="1.700" stroke-linecap="round" stroke-linejoin="round"><path d="M425.9 89.9C426.3 90.6 427.7 92.3 428.4 93.9C429.1 95.5 429.7 97.4 430.1 99.5C430.5 101.6 430.8 103.8 431.0 106.6C431.2 109.4 431.3 113.2 431.5 116.5C431.7 119.8 431.8 123.1 432.0 126.4C432.2 129.7 432.3 133.0 432.5 136.3C432.7 139.6 433.0 142.8 433.4 146.1C433.8 149.4 434.2 153.0 434.8 156.0C435.4 159.0 436.2 160.3 437.2 164.1C438.2 167.8 439.2 173.4 440.6 178.5C442.0 183.6 444.1 189.6 445.8 194.4C447.6 199.2 448.9 202.8 451.1 207.6C453.3 212.4 456.5 218.2 459.1 223.5C461.8 228.8 464.4 234.3 467.0 239.4C469.6 244.5 472.2 249.5 474.9 253.9C477.5 258.3 480.0 262.1 482.9 265.8C485.8 269.6 488.8 272.9 492.1 276.4C495.4 279.8 499.4 283.5 502.7 286.5C506.0 289.5 509.1 292.2 512.0 294.4C514.9 296.5 517.5 298.3 519.9 299.4C522.3 300.4 523.2 299.8 526.5 300.7C529.8 301.6 535.7 303.6 539.9 304.9C544.1 306.2 547.6 307.4 551.9 308.3C556.2 309.2 561.1 309.8 565.8 310.5C570.4 311.2 575.1 311.8 579.8 312.5C584.4 313.2 589.4 314.0 593.7 314.9C598.0 315.8 601.7 316.8 605.7 317.9C609.7 319.0 614.0 320.5 617.6 321.5C621.2 322.5 624.0 323.3 627.6 323.9C631.2 324.5 635.5 324.9 639.5 324.9C643.5 324.9 647.5 324.4 651.5 323.9C655.5 323.4 659.8 322.6 663.4 321.9C667.0 321.2 670.4 320.2 673.4 319.9C676.4 319.6 679.1 319.8 681.4 319.9C683.6 320.0 684.8 320.1 686.9 320.5C689.0 320.9 691.4 321.7 693.7 322.6C696.0 323.5 698.8 324.9 700.6 326.0C702.4 327.1 703.3 327.6 704.6 328.9C705.9 330.1 707.0 332.2 708.6 333.5C710.2 334.8 712.5 335.7 714.4 336.9C716.3 338.1 718.2 339.3 720.1 340.9C722.0 342.5 724.1 344.7 725.8 346.7C727.5 348.7 729.2 351.4 730.4 353.0C731.6 354.6 732.3 355.3 732.8 356.5C733.3 357.7 733.1 358.6 733.2 360.0C733.3 361.4 733.5 364.0 733.6 364.8"/><path d="M732.9 342.4C732.9 343.5 732.6 346.8 732.6 349.0C732.6 351.2 732.5 353.2 732.7 355.8C732.9 358.4 733.5 363.3 733.6 364.8"/><path d="M705.4 366.7C706.3 366.4 708.6 365.5 710.9 365.0C713.1 364.5 716.0 364.0 718.9 363.8C721.8 363.6 725.6 363.7 728.1 363.8C730.6 363.9 732.8 364.3 733.8 364.4"/></g></svg>
</body></html>
